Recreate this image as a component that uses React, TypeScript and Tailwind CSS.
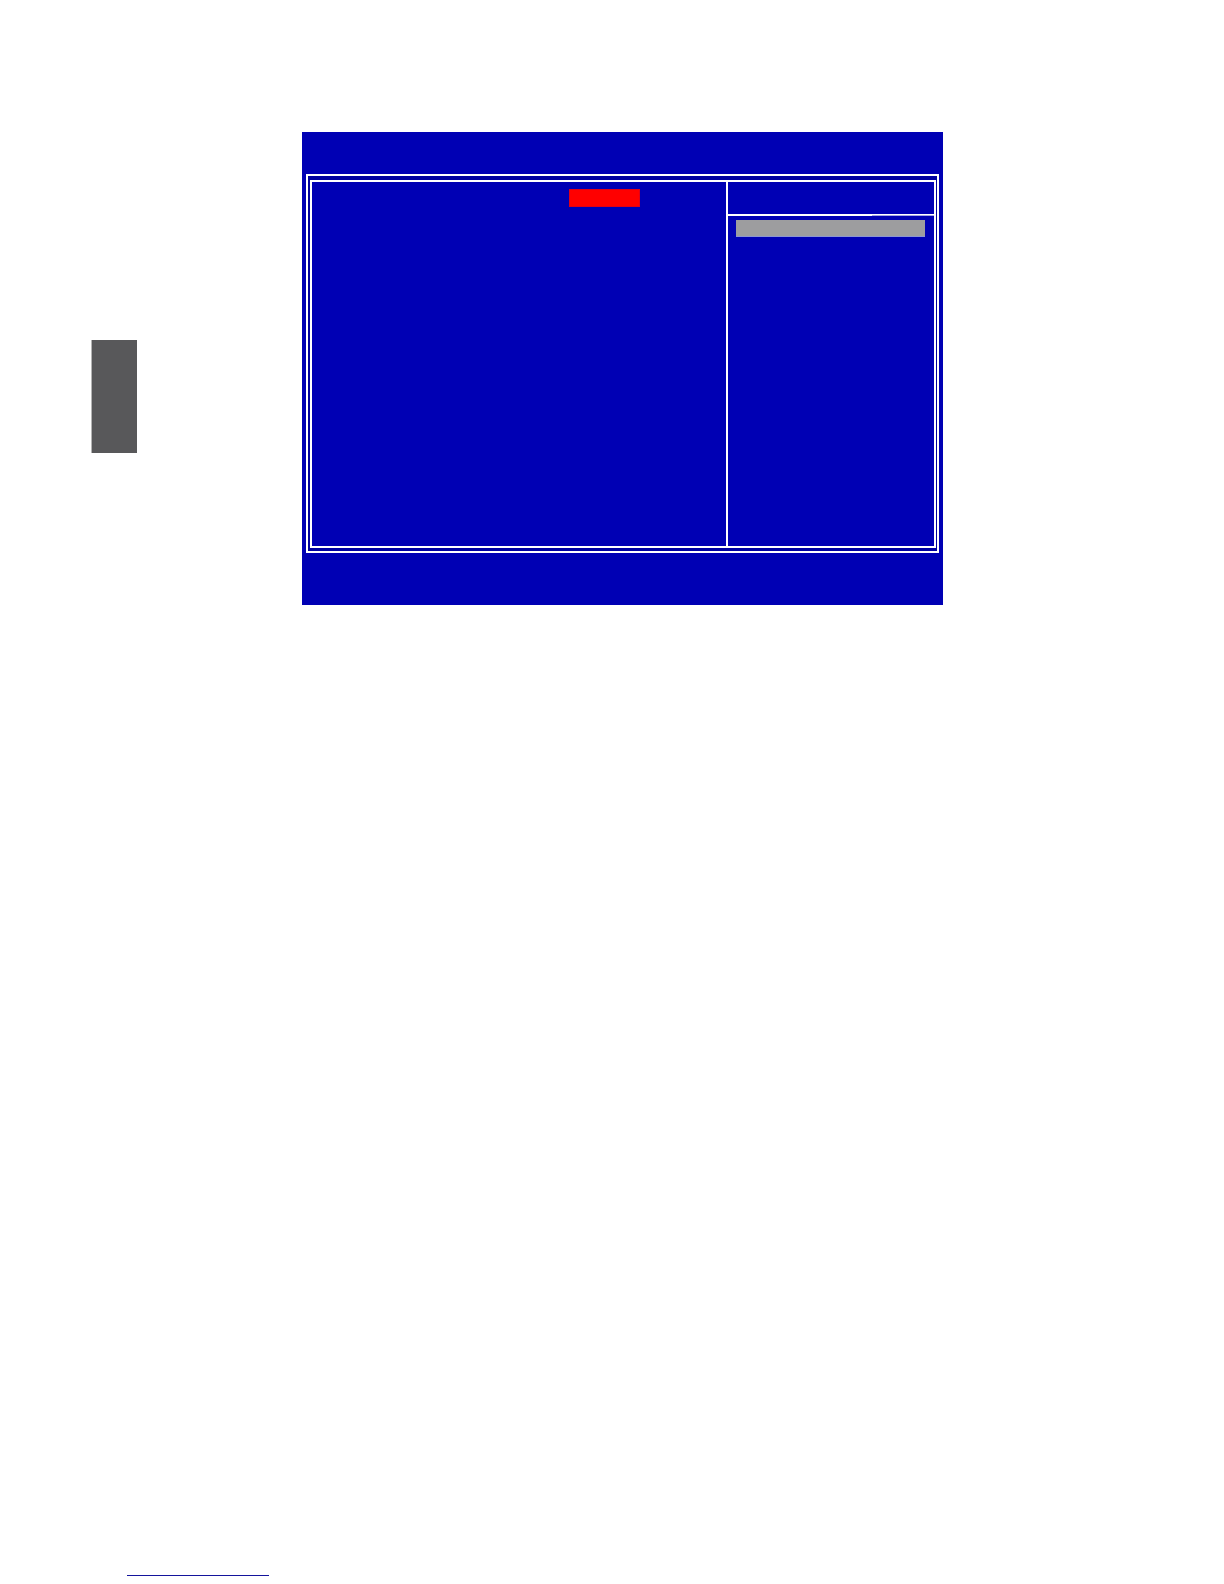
function SideTab() {
  return <aside className="mt-[208px] h-[113px] w-[46px] shrink-0 border-l border-[#b4b4b4] bg-[#58585a]" />;
}

function OptionsPane() {
  return (
    <section className="flex min-h-[364px] flex-1 justify-end border-r-2 border-white pt-[7px] pr-[86px]">
      {/* Selected value */}
      <div className="h-[18px] w-[71px] border border-[#e00018] bg-[#ff0000]" />
    </section>
  );
}

function HelpPane() {
  return (
    <section className="w-[206px] shrink-0">
      {/* Title row, ruled off from the help text */}
      <div className="h-8" />
      <div className="flex h-[2px]">
        <div className="flex-1 bg-white" />
        <div className="w-[62px] border-b border-[#a8a8e4] bg-white" />
      </div>
      <div className="mt-1 ml-2 mr-[9px] h-[17px] border-b border-[#8c96d2] bg-[#9d9d9f]" />
    </section>
  );
}

function SetupScreen() {
  return (
    <main className="flex-1 bg-[#0000b4] pt-[42px] pr-1 pb-[52px] pl-1">
      <div className="border-2 border-white bg-[#0000a0] pt-1 pr-px pb-[3px] pl-[2px]">
        <div className="flex border-2 border-white bg-[#0000b4]">
          <OptionsPane />
          <HelpPane />
        </div>
      </div>
    </main>
  );
}

export default function App() {
  return (
    <div className="flex min-h-screen flex-col bg-white">
      <div className="flex items-start pt-[132px] pr-[281px] pl-[91px]">
        <SideTab />
        <div className="w-[165px] shrink-0" />
        <SetupScreen />
      </div>
      <footer className="mt-auto pb-2 pl-[127px]">
        <div className="h-px w-[142px] bg-[#14149c]" />
      </footer>
    </div>
  );
}
